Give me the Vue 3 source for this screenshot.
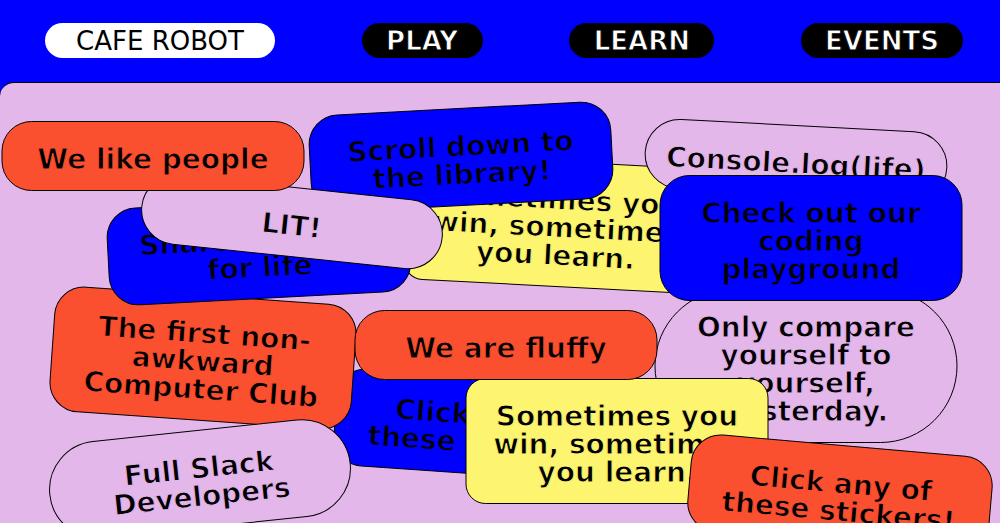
<script setup>
const links = [
  { label: 'CAFE ROBOT', kind: 'home' },
  { label: 'PLAY', kind: 'play' },
  { label: 'LEARN', kind: 'learn' },
  { label: 'EVENTS', kind: 'events' },
]

// x is the centre in percent of the board, y the centre in pixels; later stickers lie on top.
const stickers = [
  { text: 'Sometimes you\nwin, sometimes\nyou learn.', kind: 'yellow', x: 55.7, y: 141, turn: 3 },
  { text: 'Click any of\nthese stickers!', kind: 'blue', x: 48.6, y: 343, turn: 4 },
  { text: 'Only compare\nyourself to\nyourself,\nyesterday.', kind: 'pink', x: 80.6, y: 283, turn: 0 },
  { text: 'Sometimes you\nwin, sometimes\nyou learn.', kind: 'yellow', x: 61.7, y: 358, turn: 0 },
  { text: 'The first non-\nawkward\nComputer Club', kind: 'red', x: 20.3, y: 275, turn: 4 },
  { text: 'Share and care\nfor life', kind: 'blue', x: 25.9, y: 167, turn: -3 },
  { text: 'Full Slack\nDevelopers', kind: 'pink', x: 20, y: 396, turn: -6 },
  { text: 'Console.log(life)', kind: 'pink', x: 79.6, y: 77, turn: 3 },
  { text: 'Scroll down to\nthe library!', kind: 'blue', x: 46.1, y: 74, turn: -3 },
  { text: 'LIT!', kind: 'pink', x: 29.2, y: 139, turn: 6 },
  { text: 'We like people', kind: 'red', x: 15.3, y: 73, turn: 0 },
  { text: 'We are fluffy', kind: 'red', x: 50.6, y: 262, turn: 0 },
  { text: 'Check out our\ncoding\nplayground', kind: 'blue', x: 81.1, y: 155, turn: 0 },
  { text: 'Click any of\nthese stickers!', kind: 'red', x: 84, y: 411, turn: 5 },
]
</script>

<template>
  <div class="page">
    <header class="bar">
      <nav class="nav" aria-label="Main">
        <a v-for="link in links" :key="link.label" href="#" class="link" :class="link.kind">{{ link.label }}</a>
      </nav>
    </header>
    <main class="board">
      <button
        v-for="(s, i) in stickers"
        :key="i"
        type="button"
        class="sticker"
        :class="s.kind"
        :style="{ left: s.x + '%', top: s.y + 'px', transform: `translate(-50%, -50%) rotate(${s.turn}deg)` }"
      >{{ s.text }}</button>
    </main>
  </div>
</template>

<style>
body {
  background: #0000ff;
}
</style>

<style scoped>
.page {
  display: flex;
  flex-direction: column;
  min-height: 100vh;
  background: #0000ff;
  font-family: "DejaVu Sans", Verdana, sans-serif;
}
.nav {
  display: flex;
  justify-content: space-between;
  align-items: center;
  padding: 23px 37px 24px 45px;
}
.link {
  box-sizing: border-box;
  padding: 1px 8px 0;
  border-radius: 18px;
  background: #000;
  color: #fff;
  font-size: 26px;
  font-weight: 700;
  line-height: 34px;
  text-align: center;
  text-decoration: none;
  white-space: nowrap;
  -webkit-text-stroke: 1px #000;
}
.home {
  width: 230px;
  background: #fff;
  color: #000;
  font-weight: 400;
  -webkit-text-stroke: 0;
}
.play { width: 121px; }
.learn { width: 145px; }
.events { width: 162px; }
.board {
  position: relative;
  flex: 1;
  overflow: hidden;
  border-top: 1px solid #000;
  border-radius: 14px 0 0 0;
  background: #e3b7ea;
}
.sticker {
  position: absolute;
  box-sizing: border-box;
  width: 303px;
  padding: 24px 0 16px;
  border: 1px solid #000;
  border-radius: 30px;
  color: #000;
  font-family: inherit;
  font-size: 28px;
  font-weight: 700;
  line-height: 28px;
  text-align: center;
  white-space: pre;
  cursor: pointer;
  -webkit-text-stroke: 1px var(--fill);
  background: var(--fill);
}
.blue { --fill: #0000ff; }
.red { --fill: #fa5030; }
.pink {
  --fill: #e3b7ea;
  border-radius: 80px;
}
.yellow {
  --fill: #fdf470;
  border-radius: 20px;
}
</style>
